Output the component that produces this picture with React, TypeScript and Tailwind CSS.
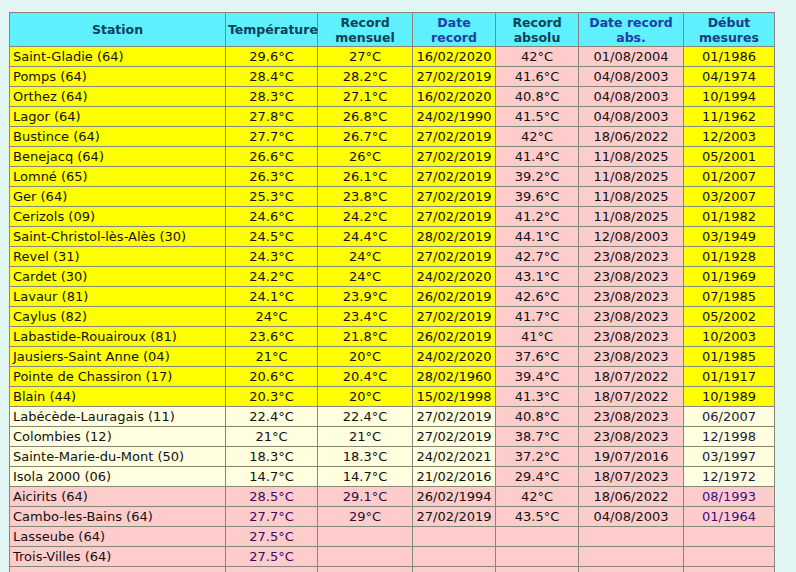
import React from 'react';

type Row = {
  station: string;
  temp: string;
  mensuel?: string;
  date?: string;
  absolu?: string;
  dateAbs?: string;
  debut?: string;
  kind: 'yellow' | 'pale' | 'pink';
};

const rows: Row[] = [
  { station: 'Saint-Gladie (64)', temp: '29.6°C', mensuel: '27°C', date: '16/02/2020', absolu: '42°C', dateAbs: '01/08/2004', debut: '01/1986', kind: 'yellow' },
  { station: 'Pomps (64)', temp: '28.4°C', mensuel: '28.2°C', date: '27/02/2019', absolu: '41.6°C', dateAbs: '04/08/2003', debut: '04/1974', kind: 'yellow' },
  { station: 'Orthez (64)', temp: '28.3°C', mensuel: '27.1°C', date: '16/02/2020', absolu: '40.8°C', dateAbs: '04/08/2003', debut: '10/1994', kind: 'yellow' },
  { station: 'Lagor (64)', temp: '27.8°C', mensuel: '26.8°C', date: '24/02/1990', absolu: '41.5°C', dateAbs: '04/08/2003', debut: '11/1962', kind: 'yellow' },
  { station: 'Bustince (64)', temp: '27.7°C', mensuel: '26.7°C', date: '27/02/2019', absolu: '42°C', dateAbs: '18/06/2022', debut: '12/2003', kind: 'yellow' },
  { station: 'Benejacq (64)', temp: '26.6°C', mensuel: '26°C', date: '27/02/2019', absolu: '41.4°C', dateAbs: '11/08/2025', debut: '05/2001', kind: 'yellow' },
  { station: 'Lomné (65)', temp: '26.3°C', mensuel: '26.1°C', date: '27/02/2019', absolu: '39.2°C', dateAbs: '11/08/2025', debut: '01/2007', kind: 'yellow' },
  { station: 'Ger (64)', temp: '25.3°C', mensuel: '23.8°C', date: '27/02/2019', absolu: '39.6°C', dateAbs: '11/08/2025', debut: '03/2007', kind: 'yellow' },
  { station: 'Cerizols (09)', temp: '24.6°C', mensuel: '24.2°C', date: '27/02/2019', absolu: '41.2°C', dateAbs: '11/08/2025', debut: '01/1982', kind: 'yellow' },
  { station: 'Saint-Christol-lès-Alès (30)', temp: '24.5°C', mensuel: '24.4°C', date: '28/02/2019', absolu: '44.1°C', dateAbs: '12/08/2003', debut: '03/1949', kind: 'yellow' },
  { station: 'Revel (31)', temp: '24.3°C', mensuel: '24°C', date: '27/02/2019', absolu: '42.7°C', dateAbs: '23/08/2023', debut: '01/1928', kind: 'yellow' },
  { station: 'Cardet (30)', temp: '24.2°C', mensuel: '24°C', date: '24/02/2020', absolu: '43.1°C', dateAbs: '23/08/2023', debut: '01/1969', kind: 'yellow' },
  { station: 'Lavaur (81)', temp: '24.1°C', mensuel: '23.9°C', date: '26/02/2019', absolu: '42.6°C', dateAbs: '23/08/2023', debut: '07/1985', kind: 'yellow' },
  { station: 'Caylus (82)', temp: '24°C', mensuel: '23.4°C', date: '27/02/2019', absolu: '41.7°C', dateAbs: '23/08/2023', debut: '05/2002', kind: 'yellow' },
  { station: 'Labastide-Rouairoux (81)', temp: '23.6°C', mensuel: '21.8°C', date: '26/02/2019', absolu: '41°C', dateAbs: '23/08/2023', debut: '10/2003', kind: 'yellow' },
  { station: 'Jausiers-Saint Anne (04)', temp: '21°C', mensuel: '20°C', date: '24/02/2020', absolu: '37.6°C', dateAbs: '23/08/2023', debut: '01/1985', kind: 'yellow' },
  { station: 'Pointe de Chassiron (17)', temp: '20.6°C', mensuel: '20.4°C', date: '28/02/1960', absolu: '39.4°C', dateAbs: '18/07/2022', debut: '01/1917', kind: 'yellow' },
  { station: 'Blain (44)', temp: '20.3°C', mensuel: '20°C', date: '15/02/1998', absolu: '41.3°C', dateAbs: '18/07/2022', debut: '10/1989', kind: 'yellow' },
  { station: 'Labécède-Lauragais (11)', temp: '22.4°C', mensuel: '22.4°C', date: '27/02/2019', absolu: '40.8°C', dateAbs: '23/08/2023', debut: '06/2007', kind: 'pale' },
  { station: 'Colombies (12)', temp: '21°C', mensuel: '21°C', date: '27/02/2019', absolu: '38.7°C', dateAbs: '23/08/2023', debut: '12/1998', kind: 'pale' },
  { station: 'Sainte-Marie-du-Mont (50)', temp: '18.3°C', mensuel: '18.3°C', date: '24/02/2021', absolu: '37.2°C', dateAbs: '19/07/2016', debut: '03/1997', kind: 'pale' },
  { station: 'Isola 2000 (06)', temp: '14.7°C', mensuel: '14.7°C', date: '21/02/2016', absolu: '29.4°C', dateAbs: '18/07/2023', debut: '12/1972', kind: 'pale' },
  { station: 'Aicirits (64)', temp: '28.5°C', mensuel: '29.1°C', date: '26/02/1994', absolu: '42°C', dateAbs: '18/06/2022', debut: '08/1993', kind: 'pink' },
  { station: 'Cambo-les-Bains (64)', temp: '27.7°C', mensuel: '29°C', date: '27/02/2019', absolu: '43.5°C', dateAbs: '04/08/2003', debut: '01/1964', kind: 'pink' },
  { station: 'Lasseube (64)', temp: '27.5°C', kind: 'pink' },
  { station: 'Trois-Villes (64)', temp: '27.5°C', kind: 'pink' },
  { station: '', temp: '', kind: 'pink' },
  { station: '', temp: '', kind: 'pink' },
];

const rowBg = {
  yellow: 'bg-[#ffff00]',
  pale: 'bg-[#ffffe0]',
  pink: 'bg-[#ffcccc]',
};

const td = 'border border-[#86867c] px-[3px] py-0 h-[20px] leading-[18px] whitespace-nowrap';

export default function App() {
  return (
    <div
      className="min-h-screen h-[572px] overflow-hidden bg-[#e2f6f4] pl-[9px] pt-[12px]"
      style={{ fontFamily: '"DejaVu Sans", Verdana, sans-serif' }}
    >
      <table className="table-fixed border-collapse w-[765px] text-[13px] text-[#111]">
        <colgroup>
          <col className="w-[216px]" />
          <col className="w-[92px]" />
          <col className="w-[95px]" />
          <col className="w-[83px]" />
          <col className="w-[83px]" />
          <col className="w-[105px]" />
          <col className="w-[91px]" />
        </colgroup>
        <thead>
          <tr className="bg-[#5ef0fc] font-bold text-center text-[12.5px] leading-[15px]">
            <th className="border border-[#86867c] h-[34px] px-[2px] text-[#0b4258]">Station</th>
            <th className="border border-[#86867c] px-[2px] text-[#0b4258]">Température</th>
            <th className="border border-[#86867c] px-[2px] text-[#0b4258]">Record<br />mensuel</th>
            <th className="border border-[#86867c] px-[2px] text-[#1d3fa6]">Date<br />record</th>
            <th className="border border-[#86867c] px-[2px] text-[#0b4258]">Record<br />absolu</th>
            <th className="border border-[#86867c] px-[2px] text-[#1d3fa6]">Date record<br />abs.</th>
            <th className="border border-[#86867c] px-[2px] text-[#143e86]">Début<br />mesures</th>
          </tr>
        </thead>
        <tbody>
          {rows.map((r, i) => {
            const bg = rowBg[r.kind];
            const pink = r.kind === 'pink';
            return (
              <tr key={i}>
                <td className={`${td} ${bg} text-left`}>{r.station}</td>
                <td className={`${td} ${bg} text-center ${pink ? 'text-[#3a0a5e]' : ''}`}>{r.temp}</td>
                <td className={`${td} ${bg} text-center ${pink ? 'text-[#2a1040]' : ''}`}>{r.mensuel}</td>
                <td className={`${td} ${bg} text-center`}>{r.date}</td>
                <td className={`${td} bg-[#ffcccc] text-center`}>{r.absolu}</td>
                <td className={`${td} bg-[#ffcccc] text-center`}>{r.dateAbs}</td>
                <td className={`${td} ${bg} text-center ${pink ? 'text-[#3a1080]' : r.kind === 'pale' ? 'text-[#1a1a40]' : ''}`}>{r.debut}</td>
              </tr>
            );
          })}
        </tbody>
      </table>
    </div>
  );
}
